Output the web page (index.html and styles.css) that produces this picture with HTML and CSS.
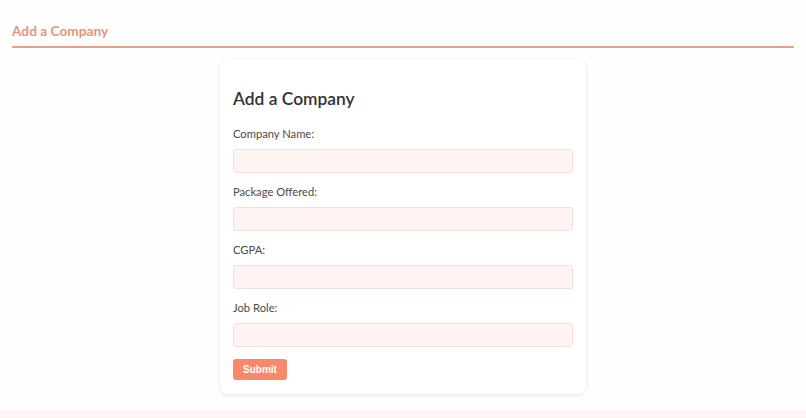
FILE: index.html
```html
<!DOCTYPE html>
<html lang="en">
<head>
    <meta charset="UTF-8">
    <meta name="viewport" content="width=device-width, initial-scale=1.0">
    <title>Add a Company</title>
    <link rel="stylesheet" href="styles.css">
</head>
<body>
    <header class="top">
        <h1>Add a Company</h1>
    </header>

    <div class="card">
        <h2>Add a Company</h2>
        <form>
            <label for="name">Company Name:</label>
            <input type="text" id="name">

            <label for="package">Package Offered:</label>
            <input type="text" id="package">

            <label for="cgpa">CGPA:</label>
            <input type="text" id="cgpa">

            <label for="role">Job Role:</label>
            <input type="text" id="role">

            <button type="submit" class="btn">Submit</button>
        </form>
    </div>

    <footer class="bottom"></footer>
</body>
</html>
```

FILE: styles.css
```css
body {
    margin: 0;
    font-family: Lato, "Open Sans", sans-serif;
    background: #fefefe;
    color: #444;
}

.top {
    margin: 0 12px;
    padding: 22px 0 6px;
    border-bottom: 2px solid #e6a18a;
}

.top h1 {
    margin: 0;
    font-size: 13.7px;
    line-height: 18px;
    font-weight: 700;
    color: #e9937a;
}

.card {
    width: 340px;
    margin: 12px auto 0;
    padding: 28px 13px 14px;
    background: white;
    border-radius: 8px;
    box-shadow: 0 1px 4px rgba(0, 0, 0, 0.1);
}

.card h2 {
    margin: 0 0 17px;
    font-size: 17.4px;
    line-height: 22px;
    font-weight: 600;
    color: #333;
}

form {
    display: flex;
    flex-direction: column;
}

label {
    font-size: 11.2px;
    line-height: 14px;
    margin-bottom: 8px;
    color: #4a4a4a;
}

input {
    box-sizing: border-box;
    height: 24px;
    margin: 0 0 12px;
    border: 1px solid #f0dfda;
    border-radius: 3px;
    background: #fff4f1;
}

.btn {
    align-self: flex-start;
    width: 54px;
    height: 21px;
    padding: 0;
    border: none;
    border-radius: 3px;
    background: #f7896a;
    color: white;
    font-family: "Liberation Sans", Arial, sans-serif;
    font-size: 10px;
    font-weight: bold;
    cursor: pointer;
}

.bottom {
    margin-top: 16px;
    height: 20px;
    background: #fff5f2;
}
```
